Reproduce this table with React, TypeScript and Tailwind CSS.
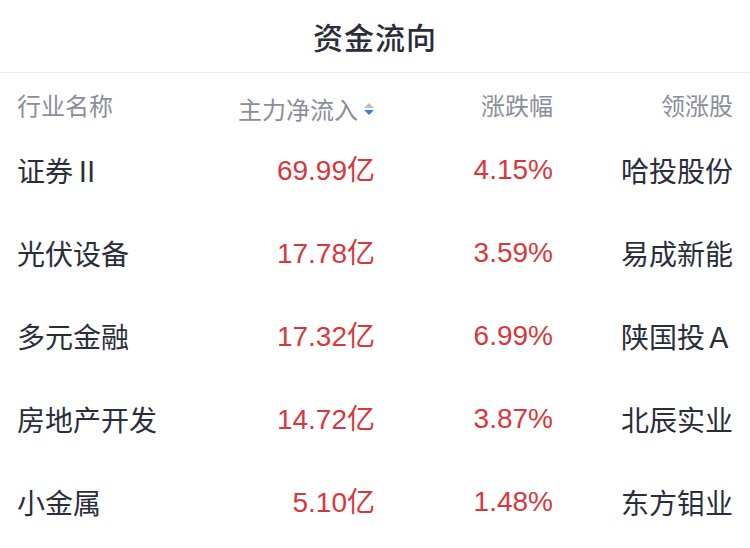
const rows = [
  { name: "证券Ⅱ", flow: "69.99", change: "4.15%", leader: "哈投股份" },
  { name: "光伏设备", flow: "17.78", change: "3.59%", leader: "易成新能" },
  { name: "多元金融", flow: "17.32", change: "6.99%", leader: "陕国投Ａ" },
  { name: "房地产开发", flow: "14.72", change: "3.87%", leader: "北辰实业" },
  { name: "小金属", flow: "5.10", change: "1.48%", leader: "东方钼业" },
];

const num = { fontFamily: '"Liberation Sans", "Noto Sans CJK SC", sans-serif' };

const SortIcon = () => (
  <svg width="12" height="14" viewBox="0 0 12 14" className="ml-[5px]">
    <path d="M6 1 L11 6 H1 Z" fill="#b9bdc7" />
    <path d="M6 13 L11 8 H1 Z" fill="#3d7fe0" />
  </svg>
);

const App = () => {
  return (
    <div
      className="w-[750px] h-[548px] bg-white overflow-hidden"
      style={{ fontFamily: '"Noto Sans CJK SC", "Noto Sans", sans-serif' }}
    >
      <div className="h-[73px] flex items-center justify-center border-b border-[#ececef]">
        <h1 className="text-[30px] font-medium text-[#2a2e3a] tracking-[1px]">资金流向</h1>
      </div>

      <div className="flex px-[17px] pt-[17px] h-[55px] text-[24px] leading-[30px] text-[#8a8e99]">
        <div className="w-[180px]">行业名称</div>
        <div className="w-[178px] flex items-center justify-end">
          主力净流入
          <SortIcon />
        </div>
        <div className="w-[178px] text-right">涨跌幅</div>
        <div className="flex-1 text-right">领涨股</div>
      </div>

      {rows.map((r) => (
        <div key={r.name} className="flex items-center px-[17px] h-[83px] text-[28px]">
          <div className="w-[180px] text-[#2a2e3a]">{r.name}</div>
          <div className="w-[178px] text-right text-[#d8383c]">
            <span style={num}>{r.flow}</span>亿
          </div>
          <div className="w-[178px] text-right text-[#d8383c]" style={num}>
            {r.change}
          </div>
          <div className="flex-1 text-right text-[#2a2e3a]">{r.leader}</div>
        </div>
      ))}
    </div>
  );
};

export default App;
